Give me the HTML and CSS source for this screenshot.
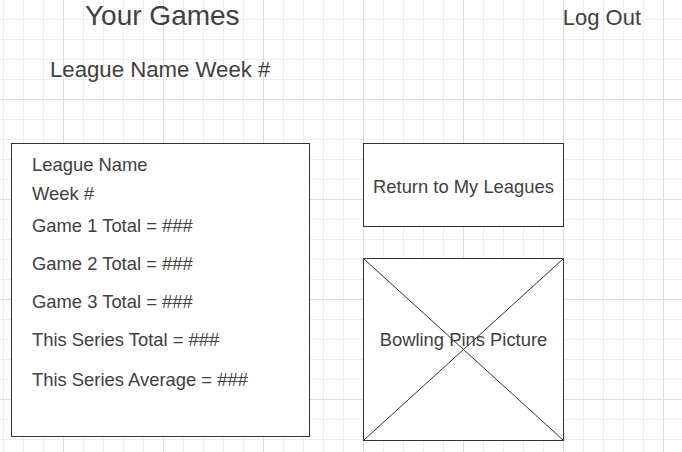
FILE: index.html
```html
<!DOCTYPE html>
<html lang="en">
<head>
<meta charset="utf-8">
<title>Your Games</title>
<link rel="stylesheet" href="styles.css">
</head>
<body>
<div class="page">
  <header class="topbar">
    <h1 class="title">Your Games</h1>
    <a class="logout" href="#">Log Out</a>
  </header>
  <h2 class="subtitle">League Name Week #</h2>
  <main class="content">
    <section class="summary">
      <div class="summary-head">
        <p class="line">League Name</p>
        <p class="line">Week #</p>
      </div>
      <div class="stats">
        <p class="line">Game 1 Total = ###</p>
        <p class="line">Game 2 Total = ###</p>
        <p class="line">Game 3 Total = ###</p>
        <p class="line">This Series Total = ###</p>
        <p class="line line-last">This Series Average = ###</p>
      </div>
    </section>
    <aside class="side">
      <a class="return-btn" href="#">Return to My Leagues</a>
      <div class="picture">
        <svg class="cross" viewBox="0 0 100 100" preserveAspectRatio="none" aria-hidden="true">
          <line x1="0" y1="0" x2="100" y2="100" vector-effect="non-scaling-stroke"/>
          <line x1="100" y1="0" x2="0" y2="100" vector-effect="non-scaling-stroke"/>
        </svg>
        <span class="picture-label">Bowling Pins Picture</span>
      </div>
    </aside>
  </main>
</div>
</body>
</html>
```

FILE: styles.css
```css
html, body {
  margin: 0;
  padding: 0;
}

body {
  min-height: 100vh;
  background-color: #ffffff;
  background-image:
    linear-gradient(to right, #dedede 1px, transparent 1px),
    linear-gradient(to bottom, #dedede 1px, transparent 1px),
    linear-gradient(to right, #ededed 1px, transparent 1px),
    linear-gradient(to bottom, #ededed 1px, transparent 1px);
  background-size: 100px 100px, 100px 100px, 20px 20px, 20px 20px;
  background-position: 63px 0, 0 99px, 3px 0, 0 19px;
  font-family: "Liberation Sans", Arial, Helvetica, sans-serif;
  color: #404040;
}

.page {
  display: flex;
  flex-direction: column;
}

.topbar {
  display: flex;
  justify-content: space-between;
  align-items: flex-start;
  height: 32px;
  padding: 0 41px 0 85px;
}

.title {
  margin: 0;
  font-size: 28px;
  line-height: 32px;
  font-weight: normal;
}

.logout {
  font-size: 22px;
  line-height: 32px;
  padding-top: 2px;
  color: #404040;
  text-decoration: none;
}

.subtitle {
  margin: 25px 0 0 50px;
  font-size: 22.2px;
  line-height: 26px;
  font-weight: normal;
}

.content {
  display: flex;
  align-items: flex-start;
  margin-top: 60px;
  padding-left: 11px;
}

.summary {
  box-sizing: border-box;
  width: 299px;
  height: 294px;
  border: 1px solid #333333;
  background: #ffffff;
  padding: 11px 0 0 20px;
}

.line {
  margin: 0;
  font-size: 18.4px;
  line-height: 20px;
}

.summary-head {
  display: flex;
  flex-direction: column;
  gap: 9px;
}

.stats {
  display: flex;
  flex-direction: column;
  gap: 18px;
  margin-top: 12px;
}

.line-last {
  margin-top: 2px;
}

.side {
  display: flex;
  flex-direction: column;
  gap: 31px;
  margin-left: 53px;
  width: 201px;
}

.return-btn {
  box-sizing: border-box;
  height: 84px;
  border: 1px solid #333333;
  background: #ffffff;
  display: flex;
  align-items: center;
  justify-content: center;
  padding-top: 3px;
  font-size: 18.4px;
  line-height: 20px;
  color: #404040;
  text-decoration: none;
}

.picture {
  position: relative;
  box-sizing: border-box;
  height: 183px;
  border: 1px solid #333333;
  background: #ffffff;
  display: flex;
  align-items: center;
  justify-content: center;
  padding-bottom: 20px;
}

.cross {
  position: absolute;
  inset: 0;
  width: 100%;
  height: 100%;
}

.cross line {
  stroke: #333333;
  stroke-width: 1;
}

.picture-label {
  position: relative;
  font-size: 18.4px;
  line-height: 20px;
}
```
